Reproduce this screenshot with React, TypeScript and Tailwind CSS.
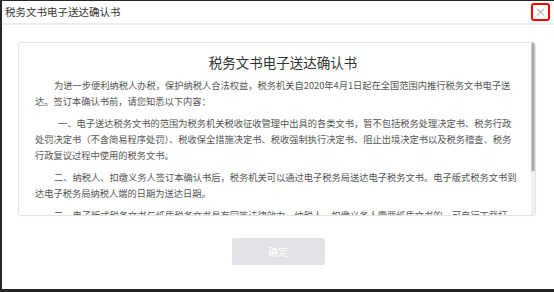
export default function App() {
  const font = { fontFamily: '"Noto Sans CJK SC", "Noto Sans", sans-serif' };
  return (
    <div className="w-[554px] h-[292px] bg-[#262626] pl-[2px] pt-px pb-[3px] flex" style={font}>
      <div className="flex-1 bg-white flex flex-col">
        <div className="h-[22px] shrink-0 flex items-center justify-between pl-[3px] pr-[4px] border-b-2 border-[#ededed] box-content">
          <span className="text-[10.5px] leading-none text-[#333]">税务文书电子送达确认书</span>
          <div className="w-[19px] h-[18px] border-2 border-[#ff0000] rounded-[3px] flex items-center justify-center text-[#a5a5a5] text-[12px] leading-none">
            ×
          </div>
        </div>
        <div className="ml-[16px] mr-[18px] mt-[17px] h-[174px] border border-[#e4e4e4] rounded-[3px] shadow-[0_0_2px_rgba(0,0,0,0.06)] flex overflow-hidden">
          <div className="flex-1 overflow-hidden pl-[16px] pt-[9px] text-[9.25px] leading-[16px] text-[#555]">
            <div className="text-center text-[13.5px] leading-[20px] text-[#333] mb-[5px]">税务文书电子送达确认书</div>
            <p className="indent-[19px] mb-[6px] whitespace-nowrap">
              为进一步便利纳税人办税，保护纳税人合法权益，税务机关自2020年4月1日起在全国范围内推行税务文书电子送
              <br />
              达。签订本确认书前，请您知悉以下内容：
            </p>
            <p className="indent-[23px] mb-[6px] whitespace-nowrap">
              一、电子送达税务文书的范围为税务机关税收征收管理中出具的各类文书，暂不包括税务处理决定书、税务行政
              <br />
              处罚决定书（不含简易程序处罚）、税收保全措施决定书、税收强制执行决定书、阻止出境决定书以及税务稽查、税务
              <br />
              行政复议过程中使用的税务文书。
            </p>
            <p className="indent-[19px] mb-[6px] whitespace-nowrap">
              二、纳税人、扣缴义务人签订本确认书后，税务机关可以通过电子税务局送达电子税务文书。电子版式税务文书到
              <br />
              达电子税务局纳税人端的日期为送达日期。
            </p>
            <p className="indent-[19px] whitespace-nowrap">
              三、电子版式税务文书与纸质税务文书具有同等法律效力。纳税人、扣缴义务人需要纸质文书的，可自行下载打
              <br />
              印。
            </p>
          </div>
          <div className="w-[4px] shrink-0 bg-[#f1f1f1] flex flex-col">
            <div className="h-[128px] bg-[#a9a9a9] border-x border-[#c8c8c8]" />
          </div>
        </div>
        <div className="mt-[22px] self-center w-[93px] h-[27px] bg-[#e1e2e6] rounded-[2px] flex items-center justify-center text-white text-[10px]">
          确定
        </div>
      </div>
    </div>
  );
}
